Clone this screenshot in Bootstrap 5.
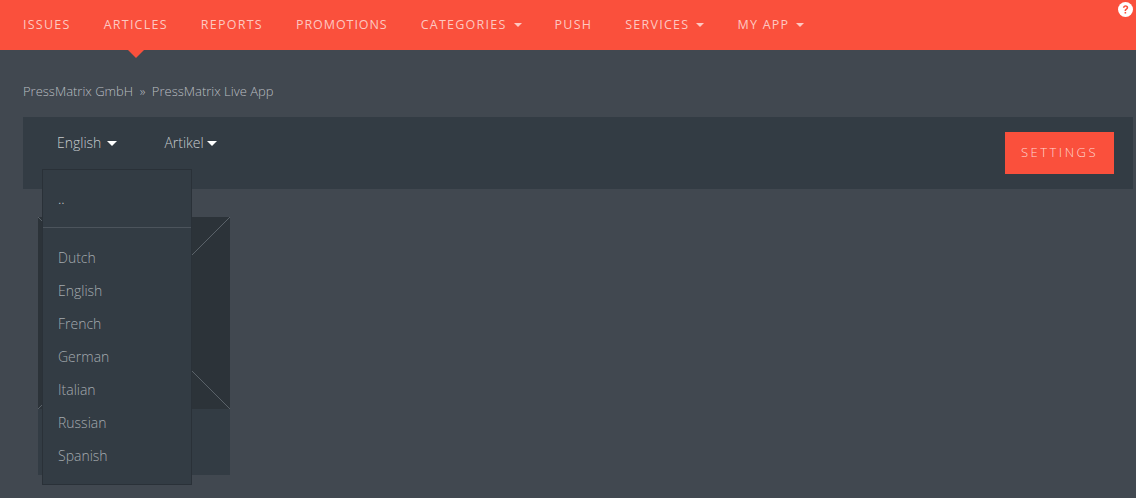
<!DOCTYPE html>
<html lang="en">
<head>
    <meta charset="UTF-8">
    <meta name="viewport" content="width=device-width, initial-scale=1.0">
    <title>PressMatrix</title>
    <link rel="stylesheet" href="https://cdn.jsdelivr.net/npm/bootstrap@5.3.0/dist/css/bootstrap.min.css">
    <style>
        html, body {
            height: 100%;
        }
        body {
            background-color: #414850;
            font-family: "Open Sans", "Liberation Sans", sans-serif;
            font-weight: 300;
            font-size: 14px;
            color: #c6cacd;
        }
        .top-bar {
            background-color: #fa503c;
            height: 50px;
            padding: 0 3px 0 23px;
        }
        .top-links {
            gap: 33px;
        }
        .top-links a {
            color: #fdc8c1;
            font-size: 12.5px;
            letter-spacing: 1.25px;
            line-height: 49px;
            height: 50px;
            text-decoration: none;
            text-transform: uppercase;
            position: relative;
            display: block;
            font-weight: 400;
        }
        .top-links a.tight-link {
            letter-spacing: .94px;
        }
        .top-links a.dropdown-toggle::after {
            margin-left: 7px;
            vertical-align: 2px;
            border-top-width: 4px;
            border-left-width: 4px;
            border-right-width: 4px;
        }
        .top-links a.on::after {
            content: "";
            position: absolute;
            left: 50%;
            top: 50px;
            margin-left: -8px;
            border-left: 8px solid transparent;
            border-right: 8px solid transparent;
            border-top: 8px solid #fa503c;
        }
        .help-dot {
            width: 15px;
            height: 15px;
            margin-top: 2px;
        }
        .crumbs {
            padding: 31px 23px 0;
            height: 67px;
            line-height: 20px;
            font-size: 13px;
            color: #b9bdc1;
            gap: 6.5px;
        }
        .tool-bar {
            background-color: #333c44;
            margin: 0 3px 0 23px;
            height: 72px;
            position: relative;
        }
        .tool-bar a.dropdown-toggle {
            color: #c6cacd;
            text-decoration: none;
            display: block;
            line-height: 20px;
            margin-top: 16px;
        }
        .tool-bar a.dropdown-toggle::after {
            border-top-width: 5px;
            border-left-width: 5px;
            border-right-width: 5px;
            vertical-align: 2px;
            color: #fff;
        }
        .lang-pick {
            margin-left: 34px;
            position: relative;
        }
        .lang-pick a.dropdown-toggle::after {
            margin-left: 6px;
        }
        .kind-pick {
            margin-left: 47px;
        }
        .kind-pick a.dropdown-toggle::after {
            margin-left: 3px;
        }
        .lang-menu.dropdown-menu {
            background-color: #333c44;
            border: 1px solid #2a3138;
            border-radius: 0;
            width: 150px;
            min-width: 0;
            height: 316px;
            padding: 0;
            left: -15px;
            top: 52px;
            z-index: 5;
            font-size: 14px;
        }
        .lang-menu .dropdown-item {
            color: #a4aaaf;
            line-height: 33px;
            padding: 0 15px;
            font-weight: 300;
        }
        .lang-menu .up-item {
            color: #c6cacd;
            height: 57px;
            line-height: 57px;
        }
        .lang-menu .dropdown-divider {
            border-top: 1px solid #4c545c;
            margin: 0 0 13px;
            opacity: 1;
        }
        .settings-btn {
            background-color: #fa503c;
            color: #fed5d0;
            border: 0;
            border-radius: 0;
            width: 109px;
            height: 42px;
            margin: 15px 19px 0 0;
            font-size: 13px;
            font-weight: 300;
            letter-spacing: 2.5px;
            padding: 0;
        }
        .issue-box {
            width: 192px;
            margin: 28px 0 0 38px;
        }
        .issue-cover {
            display: block;
            width: 192px;
            height: 192px;
            background-color: #2c3339;
        }
        .issue-caption {
            height: 66px;
            background-color: #333c44;
        }
    </style>
</head>
<body>

    <nav class="top-bar d-flex justify-content-between">
        <div class="top-links d-flex">
            <a href="#">Issues</a>
            <a href="#" class="on">Articles</a>
            <a href="#">Reports</a>
            <a href="#" class="tight-link">Promotions</a>
            <a href="#" class="dropdown-toggle">Categories</a>
            <a href="#">Push</a>
            <a href="#" class="dropdown-toggle">Services</a>
            <a href="#" class="dropdown-toggle">My App</a>
        </div>
        <svg class="help-dot" viewBox="0 0 16 16">
            <circle cx="8" cy="8" r="8" fill="#fff"/>
            <path d="M5.2 6.2C5.3 4.5 6.5 3.5 8.1 3.5c1.600 0 2.800 1 2.800 2.400 0 1.200-.7 1.800-1.500 2.300-.6.4-.8.7-.8 1.400H7c0-1.200.4-1.800 1.200-2.300.7-.4 1-.8 1-1.300 0-.6-.5-1-1.100-1-.7 0-1.100.5-1.200 1.200z" fill="#fa503c"/>
            <rect x="7" y="10.600" width="1.700" height="1.700" fill="#fa503c"/>
        </svg>
    </nav>

    <div class="crumbs d-flex">
        <span>PressMatrix GmbH</span>
        <span>»</span>
        <span>PressMatrix Live App</span>
    </div>

    <div class="tool-bar d-flex justify-content-between">
        <div class="d-flex">
            <div class="lang-pick">
                <a href="#" class="dropdown-toggle">English</a>
                <div class="dropdown-menu show lang-menu">
                    <a class="dropdown-item up-item" href="#">..</a>
                    <div class="dropdown-divider"></div>
                    <a class="dropdown-item" href="#">Dutch</a>
                    <a class="dropdown-item" href="#">English</a>
                    <a class="dropdown-item" href="#">French</a>
                    <a class="dropdown-item" href="#">German</a>
                    <a class="dropdown-item" href="#">Italian</a>
                    <a class="dropdown-item" href="#">Russian</a>
                    <a class="dropdown-item" href="#">Spanish</a>
                </div>
            </div>
            <div class="kind-pick">
                <a href="#" class="dropdown-toggle">Artikel</a>
            </div>
        </div>
        <button class="settings-btn text-uppercase">Settings</button>
    </div>

    <div class="issue-box">
        <svg class="issue-cover" viewBox="0 0 192 192">
            <path d="M0 0L192 192M192 0L0 192" stroke="#5a6269" stroke-width="1"/>
        </svg>
        <div class="issue-caption"></div>
    </div>

    <script src="https://cdn.jsdelivr.net/npm/bootstrap@5.3.0/dist/js/bootstrap.bundle.min.js"></script>
</body>
</html>
